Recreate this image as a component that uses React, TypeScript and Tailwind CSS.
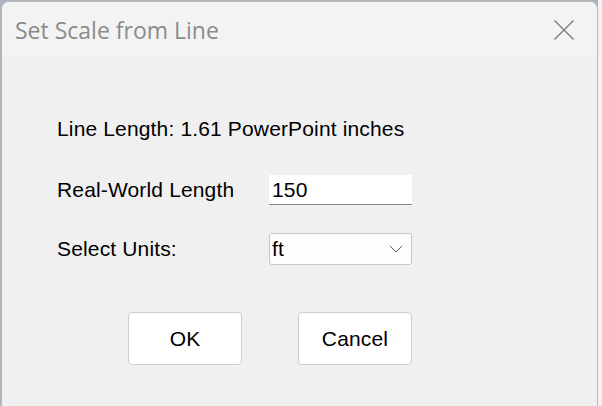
import { useState } from 'react';

export default function App() {
  const [length, setLength] = useState('150');

  return (
    <div className="w-[602px] h-[406px] overflow-hidden bg-[#aab2bb] flex">
      <div className="ml-[1px] mt-[1px] w-[597px] h-[420px] shrink-0 rounded-[8px] border border-[#b9b9b9] bg-[#f0f0f0] overflow-hidden flex flex-col">
        {/* Title bar */}
        <div className="h-[55px] shrink-0 bg-[#f3f3f3] flex items-center justify-between pl-[13px] pr-[22px]">
          <span
            className="text-[23px] text-[#8b8b8b] pt-[1px]"
            style={{ fontFamily: '"Open Sans", "Noto Sans", sans-serif' }}
          >
            Set Scale from Line
          </span>
          <svg width="22" height="22" viewBox="0 0 22 22" className="mt-[1px]">
            <path d="M1.5 1.5 L20.5 20.5 M20.5 1.5 L1.5 20.5" stroke="#7d7d7d" strokeWidth="1.4" fill="none" />
          </svg>
        </div>

        {/* Body */}
        <div
          className="flex flex-col pl-[55px] text-[21px] tracking-[0.15px] text-black"
          style={{ fontFamily: '"Liberation Sans", Arial, sans-serif' }}
        >
          <div className="mt-[60px] leading-[24px]">Line Length: 1.61 PowerPoint inches</div>

          <div className="mt-[34px] flex items-center h-[30px]">
            <span className="w-[212px] leading-[24px]">Real-World Length</span>
            <input
              value={length}
              onChange={e => setLength(e.target.value)}
              className="w-[143px] h-[30px] bg-white border-b border-[#858585] px-[3px] pt-[1px] text-[21px] outline-none"
            />
          </div>

          <div className="mt-[28px] flex items-center h-[32px]">
            <span className="w-[212px] leading-[24px]">Select Units:</span>
            <div className="w-[143px] h-[32px] bg-[#fdfdfd] border border-[#c7c7c7] rounded-[3px] flex items-center justify-between pl-[2px] pr-[8px]">
              <span className="leading-[24px]">ft</span>
              <svg width="14" height="8" viewBox="0 0 14 8">
                <path d="M1 1 L7 7 L13 1" stroke="#555" strokeWidth="1" fill="none" />
              </svg>
            </div>
          </div>

          <div className="mt-[47px] flex gap-[56px] pl-[71px]">
            <button className="w-[114px] h-[53px] bg-white border border-[#cfcfcf] rounded-[4px] text-[21px]">
              OK
            </button>
            <button className="w-[114px] h-[53px] bg-white border border-[#cfcfcf] rounded-[4px] text-[21px]">
              Cancel
            </button>
          </div>
        </div>
      </div>
      <div className="flex-1 bg-[#f2f2f2]" />
    </div>
  );
}
